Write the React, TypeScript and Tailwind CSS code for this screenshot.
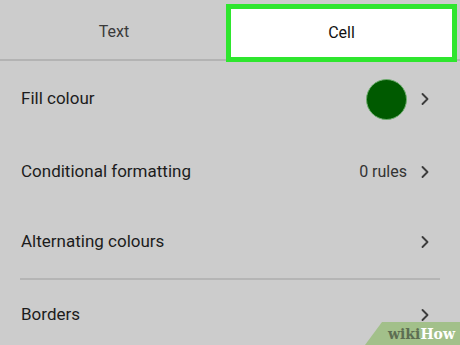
import { ChevronRight } from 'lucide-react'

const font = { fontFamily: 'Roboto, "Liberation Sans", sans-serif' }

function Chevron() {
    return <ChevronRight className="h-5 w-5 text-[#3c3c3c]" strokeWidth={2.25} />
}

export default function App() {
    return (
        <div className="relative h-[345px] w-[460px] overflow-hidden bg-[#cccccc]" style={font}>
            {/* Tabs */}
            <div className="relative flex h-[61px] border-b-2 border-[#b3b3b3]">
                <div className="flex w-[228px] items-center justify-center pt-1 text-[16px] text-[#3a3a3a]">Text</div>
                <div className="absolute left-[226px] top-[4px] flex h-[58px] w-[231px] items-center justify-center border-[5px] border-[#2ee62e] bg-white text-[16px] text-[#111]">
                    Cell
                </div>
            </div>

            {/* Rows */}
            <div className="flex h-[75px] items-center justify-between pl-[21px] pr-[25px] pt-[1px]">
                <span className="text-[17px] text-[#1c1c1c]">Fill colour</span>
                <div className="flex items-center gap-[8px]">
                    <div className="h-[41px] w-[41px] rounded-full border border-[#6fae6f] bg-[#005a00]" />
                    <Chevron />
                </div>
            </div>
            <div className="flex h-[72px] items-center justify-between pl-[21px] pr-[25px]">
                <span className="text-[17px] text-[#1c1c1c]">Conditional formatting</span>
                <div className="flex items-center gap-[8px]">
                    <span className="text-[16px] text-[#333]">0 rules</span>
                    <Chevron />
                </div>
            </div>
            <div className="flex h-[70px] items-center justify-between pb-[2px] pl-[21px] pr-[25px]">
                <span className="text-[17px] text-[#1c1c1c]">Alternating colours</span>
                <Chevron />
            </div>
            <div className="mx-[20px] h-[2px] bg-[#b5b5b5]" />
            <div className="flex h-[70px] items-center justify-between pl-[21px] pr-[25px]">
                <span className="text-[17px] text-[#1c1c1c]">Borders</span>
                <Chevron />
            </div>

            {/* wikiHow watermark */}
            <div className="absolute bottom-0 right-0 flex h-[23px] w-[95px] items-center justify-end pr-[5px]">
                <svg className="absolute inset-0" width="95" height="23" viewBox="0 0 95 23">
                    <polygon points="17,0 95,0 95,23 0,23" fill="#a2c08a" />
                </svg>
                <span className="relative text-[14px] font-bold leading-none" style={{ fontFamily: '"DejaVu Serif", "Liberation Serif", serif' }}>
                    <span className="text-[#5d6e52]">wiki</span>
                    <span className="text-white">How</span>
                </span>
            </div>
        </div>
    )
}
